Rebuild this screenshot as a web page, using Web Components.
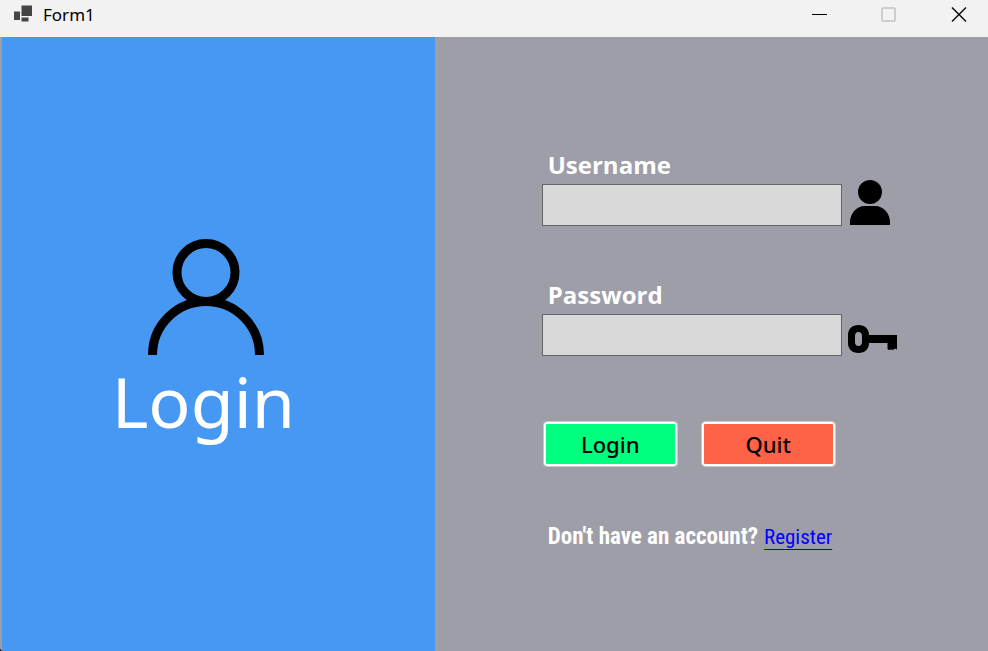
<!DOCTYPE html>
<html lang="en">
<head>
<meta charset="utf-8">
<title>Form1</title>
<style>
html, body { margin: 0; height: 100%; }
body { background: #9e9ea8; font-family: "Open Sans", "Noto Sans", sans-serif; }
</style>
</head>
<body>
<login-window></login-window>
<script>
class BaseElement extends HTMLElement {
  constructor() {
    super();
    this.attachShadow({ mode: "open", delegatesFocus: true }).innerHTML = this.render();
  }
}

customElements.define("title-bar", class extends BaseElement {
  render() {
    return `<style>
      :host { display: flex; justify-content: space-between; background: #f2f2f2; color: #000; height: 37px; overflow: hidden; }
      .name { display: flex; align-items: center; gap: 10px; padding-left: 13px; height: 30px; font: 17px/30px "Noto Sans", sans-serif; }
      .controls { display: flex; height: 30px; margin-right: -6px; }
      button { width: 70px; padding: 0; border: 0; background: none; display: flex; align-items: center; justify-content: center; }
      svg { display: block; }
    </style>
    <div class="name">
      <svg width="20" height="20" viewBox="0 0 20 20" fill="#444"><path d="M8.500.5h10.500v10.500h-10.500zM1 6.500h6v8.500h-6zM8.500 12.500h7v4h-7z"/></svg>
      <span><slot></slot></span>
    </div>
    <div class="controls">
      <button type="button" aria-label="Minimize"><svg width="16" height="16"><path d="M1 7.500h15" stroke="#000"/></svg></button>
      <button type="button" aria-label="Maximize" disabled><svg width="16" height="16"><rect x="1" y="1" width="13" height="13" rx="1" fill="none" stroke="#c2c2c2" stroke-width="1.500"/></svg></button>
      <button type="button" aria-label="Close"><svg width="16" height="16"><path d="M1 .5l14 14M15 .5l-14 14" stroke="#111" stroke-width="1.500"/></svg></button>
    </div>`;
  }
});

customElements.define("brand-panel", class extends BaseElement {
  render() {
    return `<style>
      :host { display: flex; flex-direction: column; align-items: center; box-sizing: border-box; background: #4698f3; border-left: 2px solid #9e9ea8; padding: 202px 24px 24px 0; }
      h1 { margin: 6px 0 0; padding-right: 6px; color: #fff; font: 400 70px/80px "Noto Sans", sans-serif; }
      svg { display: block; }
    </style>
    <svg width="116" height="116" viewBox="0 0 116 116" fill="none" stroke="#000" stroke-width="9"><circle cx="58" cy="33.500" r="29"/><path d="M4.500 116C4.500 86 29 62.500 58 62.500S111.500 86 111.500 116"/></svg>
    <h1><slot></slot></h1>`;
  }
});

customElements.define("text-field", class extends BaseElement {
  static observedAttributes = ["type"];
  attributeChangedCallback(name, old, value) { this.shadowRoot.querySelector("input").type = value; }
  render() {
    return `<style>
      :host { display: block; }
      label { display: block; padding: 0 0 2px 6px; color: #fff; font: 700 24px/34px "Open Sans", sans-serif; }
      .row { display: flex; align-items: flex-end; height: 42px; }
      input { box-sizing: border-box; width: 300px; height: 42px; margin: 0; padding: 0 8px; border: 1px solid #646464; border-radius: 0; background: #d9d9d9; font: 22px "Open Sans", sans-serif; }
    </style>
    <label for="field"><slot></slot></label>
    <div class="row"><input id="field"><slot name="icon"></slot></div>`;
  }
});

customElements.define("user-icon", class extends BaseElement {
  render() {
    return `<style>:host { display: block; padding: 0 0 1px 8px; } svg { display: block; }</style>
    <svg width="40" height="45" viewBox="0 0 40 45"><circle cx="20" cy="12" r="12"/><path d="M0 45v-3C0 34 6 26 15 26h10c9 0 15 8 15 16v3z"/></svg>`;
  }
});

customElements.define("key-icon", class extends BaseElement {
  render() {
    return `<style>:host { display: block; padding: 0 0 3px 6px; } svg { display: block; }</style>
    <svg width="49" height="28" viewBox="0 0 49 28"><path fill-rule="evenodd" d="M10.500 0C17 0 21 4 21 10h28v14.500l-2-1-2 1.500-2-.5-2 .5c-1 0-1.500-1-1.500-2v-5H21c0 6-4 10-10.500 10S0 24 0 18v-8C0 4 4 0 10.500 0zM10.500 7C8 7 7 9 7 11v6c0 2 1 4 3.500 4s3.500-2 3.500-4v-6c0-2-1-4-3.500-4z"/></svg>`;
  }
});

customElements.define("action-button", class extends BaseElement {
  render() {
    return `<style>
      :host { display: block; }
      button { display: block; box-sizing: border-box; width: 135px; height: 46px; margin: 0; padding: 0; border: 1px solid #c8c8cd; border-radius: 4px; box-shadow: inset 0 0 0 2px #fff; background: var(--fill); color: #000; font: 500 22px/30px "Noto Sans", sans-serif; }
    </style>
    <button type="button"><slot></slot></button>`;
  }
});

customElements.define("register-prompt", class extends BaseElement {
  render() {
    return `<style>
      :host { display: flex; align-items: baseline; gap: 6px; color: #fff; font: 700 23px/36px "Roboto Condensed", "Liberation Sans Narrow", sans-serif; white-space: nowrap; }
      a { color: #00f; font-weight: 400; font-size: 21px; text-decoration: underline; text-decoration-thickness: 1px; text-underline-offset: 5px; }
    </style>
    <span><slot></slot></span><a href="#register"><slot name="link"></slot></a>`;
  }
});

customElements.define("login-form", class extends BaseElement {
  render() {
    return `<style>
      :host { display: block; padding: 111px 24px 24px 107px; }
      form { display: grid; gap: 52px; }
      .actions { display: flex; gap: 23px; padding: 13px 0 0 1px; }
      register-prompt { padding-left: 6px; }
      .green { --fill: #00ff7f; }
      .red { --fill: #ff6347; }
    </style>
    <form>
      <text-field type="text">Username<user-icon slot="icon"></user-icon></text-field>
      <text-field type="password">Password<key-icon slot="icon"></key-icon></text-field>
      <div class="actions"><action-button class="green">Login</action-button><action-button class="red">Quit</action-button></div>
      <register-prompt>Don't have an account?<span slot="link">Register</span></register-prompt>
    </form>`;
  }
});

customElements.define("login-window", class extends BaseElement {
  render() {
    return `<style>
      :host { display: flex; flex-direction: column; min-height: 100vh; background: #9e9ea8; }
      main { flex: 1; display: grid; grid-template-columns: 44% 1fr; }
      brand-panel { border-bottom-left-radius: 4px; }
      main { background: linear-gradient(45deg, #222 3px, #9e9ea8 4px); }
    </style>
    <title-bar>Form1</title-bar>
    <main><brand-panel>Login</brand-panel><login-form></login-form></main>`;
  }
});
</script>
</body>
</html>
